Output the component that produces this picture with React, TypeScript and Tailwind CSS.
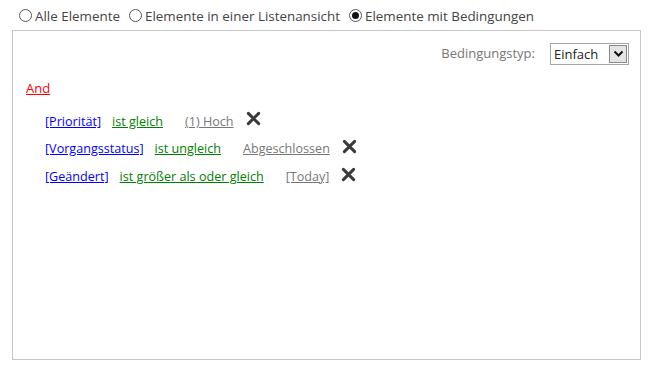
import React from 'react'

function Radio({ checked, label }: { checked?: boolean; label: string }) {
  return (
    <label className="flex items-center gap-[3px]">
      <span className="flex h-[13px] w-[13px] items-center justify-center rounded-full border border-[#555] bg-white">
        {checked && <span className="h-[7px] w-[7px] rounded-full bg-[#111]" />}
      </span>
      <span>{label}</span>
    </label>
  )
}

function RemoveIcon() {
  return (
    <svg width="15" height="15" viewBox="0 0 16 16" className="shrink-0">
      <path d="M2.5 2.5 L13.5 13.5 M13.5 2.5 L2.5 13.5" stroke="#3a3a3a" strokeWidth="3.2" strokeLinecap="round" />
    </svg>
  )
}

const rows = [
  { field: '[Priorität]', op: 'ist gleich', value: '(1) Hoch', up: true },
  { field: '[Vorgangsstatus]', op: 'ist ungleich', value: 'Abgeschlossen', up: false },
  { field: '[Geändert]', op: 'ist größer als oder gleich', value: '[Today]', up: false },
]

export default function App() {
  return (
    <div className="h-[369px] w-[653px] bg-white text-[12.6px] text-[#444]" style={{ fontFamily: '"Open Sans", "Noto Sans", sans-serif' }}>
      {/* Auswahl */}
      <div className="flex h-[30px] items-center gap-[9px] pl-[19px] pt-[2px] text-[13.4px]">
        <Radio label="Alle Elemente" />
        <Radio label="Elemente in einer Listenansicht" />
        <Radio checked label="Elemente mit Bedingungen" />
      </div>

      {/* Bedingungen */}
      <div className="mx-[12px] h-[330px] border border-[#c6c6c6] bg-white">
        <div className="flex items-center justify-end gap-[15px] pt-[12px] pr-[11px] text-[13px]">
          <span className="text-[#777]">Bedingungstyp:</span>
          <div className="flex h-[22px] w-[79px] items-stretch border border-[#a6a6a6] bg-white">
            <span className="flex-1 pl-[3px] leading-[20px] text-[#222]">Einfach</span>
            <span className="m-[1px] flex w-[18px] items-center justify-center border border-[#8a8a8a] bg-[#e4e4e4]">
              <svg width="11" height="8" viewBox="0 0 11 8">
                <path d="M1.5 1.5 L5.5 5.5 L9.5 1.5" fill="none" stroke="#111" strokeWidth="2" />
              </svg>
            </span>
          </div>
        </div>

        <div className="pl-[13px] pt-[14px] text-[13px]">
          <a className="text-[#ff0000] underline">And</a>
        </div>

        <div className="flex flex-col gap-[7px] pl-[32px] pt-[14px]">
          {rows.map((r, i) => (
            <div key={r.field} className={`flex h-[20px] items-center ${i === 2 ? 'mt-[1px]' : ''}`}>
              <a className="mr-[11px] text-[#0000ff] underline">{r.field}</a>
              <a className="mr-[22px] text-[#008000] underline">{r.op}</a>
              <a className="mr-[12px] text-[#777] underline">{r.value}</a>
              <span className={r.up ? '-mt-[9px]' : '-mt-[6px]'}>
                <RemoveIcon />
              </span>
            </div>
          ))}
        </div>
      </div>
    </div>
  )
}
